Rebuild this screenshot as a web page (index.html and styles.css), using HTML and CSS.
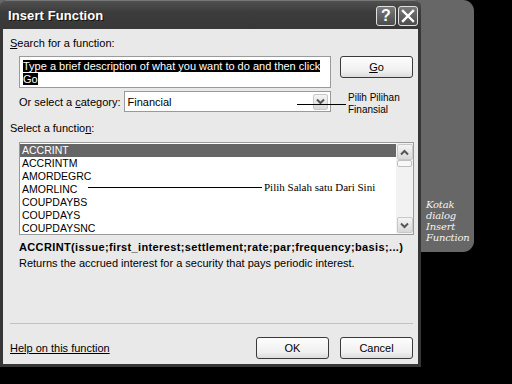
FILE: index.html
```html
<!DOCTYPE html>
<html>
<head>
<meta charset="utf-8">
<link rel="stylesheet" href="styles.css">
</head>
<body>
<div class="stage">
  <div class="panel">
    <div class="caption">Kotak dialog Insert Function</div>
  </div>
  <div class="dialog">
    <div class="titlebar">
      <span class="title">Insert Function</span>
      <div class="tbtns">
        <span class="tbtn">?</span>
        <span class="tbtn"><svg width="14" height="14" viewBox="0 0 14 14"><path d="M2 2 L12 12 M12 2 L2 12" stroke="#fff" stroke-width="2.4" stroke-linecap="square"/></svg></span>
      </div>
    </div>
    <div class="body">
      <div class="label lbl-search"><u>S</u>earch for a function:</div>
      <div class="row search-row">
        <div class="search-box"><span class="sel">Type a brief description of what you want to do and then click<br>Go</span></div>
        <div class="btn go"><u>G</u>o</div>
      </div>
      <div class="row cat-row">
        <div class="label">Or select a <u>c</u>ategory:</div>
        <div class="combo">
          <span>Financial</span>
          <span class="combo-btn"><svg width="9" height="7" viewBox="0 0 9 7"><path d="M1 1.5 L4.5 5 L8 1.5" stroke="#555" stroke-width="2" fill="none"/></svg></span>
        </div>
        <div class="note note-cat"><span class="note-line"></span><span class="note-text">Pilih Pilihan<br>Finansial</span></div>
      </div>
      <div class="label lbl-func">Select a functio<u>n</u>:</div>
      <div class="listbox">
        <div class="items">
          <div class="item active">ACCRINT</div>
          <div class="item">ACCRINTM</div>
          <div class="item">AMORDEGRC</div>
          <div class="item">AMORLINC</div>
          <div class="item">COUPDAYBS</div>
          <div class="item">COUPDAYS</div>
          <div class="item">COUPDAYSNC</div>
        </div>
        <div class="scrollbar">
          <span class="sbtn"><svg width="9" height="7" viewBox="0 0 9 7"><path d="M1 5.5 L4.5 2 L8 5.5" stroke="#555" stroke-width="2" fill="none"/></svg></span>
          <span class="thumb"></span>
          <span class="track"></span>
          <span class="sbtn"><svg width="9" height="7" viewBox="0 0 9 7"><path d="M1 1.5 L4.5 5 L8 1.5" stroke="#555" stroke-width="2" fill="none"/></svg></span>
        </div>
        <div class="note note-list"><span class="note-line"></span><span class="note-text serif">Pilih Salah satu Dari Sini</span></div>
      </div>
      <div class="sig">ACCRINT(issue;first_interest;settlement;rate;par;frequency;basis;...)</div>
      <div class="desc">Returns the accrued interest for a security that pays periodic interest.</div>
      <div class="spacer"></div>
      <div class="sep"></div>
      <div class="row foot">
        <span class="help">Help on this function</span>
        <div class="btns">
          <div class="btn">OK</div>
          <div class="btn">Cancel</div>
        </div>
      </div>
    </div>
  </div>
</div>
</body>
</html>
```
FILE: styles.css
```css
html, body {
  margin: 0;
  padding: 0;
  background: #000;
  width: 512px;
  height: 384px;
  overflow: hidden;
  font-family: "Liberation Sans", Arial, sans-serif;
  font-size: 11px;
  color: #000;
}
.stage {
  display: grid;
  grid-template-columns: 512px;
  grid-template-rows: 384px;
}
.panel, .dialog {
  grid-area: 1 / 1;
}
.panel {
  width: 474px;
  height: 252px;
  background: #676767;
  border-radius: 0 11px 11px 0;
  display: flex;
  justify-content: flex-end;
  align-items: flex-end;
  box-sizing: border-box;
  padding: 0 1px 9px 0;
}
.caption {
  width: 47px;
  color: #f4f4f4;
  font-family: "DejaVu Serif", serif;
  font-style: italic;
  font-size: 10px;
  line-height: 11px;
  letter-spacing: -0.2px;
}
.dialog {
  width: 421px;
  height: 367px;
  box-sizing: border-box;
  display: flex;
  flex-direction: column;
  background: #363636;
  border-radius: 6px 6px 0 0;
  padding: 0 3px 3px 3px;
  align-self: start;
  position: relative;
}
.titlebar {
  height: 29px;
  display: flex;
  align-items: center;
  justify-content: space-between;
  background: linear-gradient(#505050, #3c3c3c 40%, #383838);
  margin: 0 -3px;
  padding: 0 3px 0 8px;
  border-radius: 6px 6px 0 0;
  border-top: 1px solid #777;
  box-sizing: border-box;
}
.title {
  color: #fff;
  font-weight: bold;
  font-size: 13px;
  letter-spacing: 0.1px;
  text-shadow: 1px 1px 0 #111;
}
.tbtns {
  display: flex;
  gap: 2px;
  margin-top: 2px;
}
.tbtn {
  width: 20px;
  height: 20px;
  box-sizing: border-box;
  border: 1px solid #e0e0e0;
  border-radius: 3px;
  background: linear-gradient(#7a7a7a, #4c4c4c);
  color: #fff;
  font-weight: bold;
  font-size: 16px;
  display: flex;
  align-items: center;
  justify-content: center;
  line-height: 1;
}
.body {
  flex: 1;
  background: #e9e9e9;
  display: flex;
  flex-direction: column;
  padding: 0 5px 0 7px;
  position: relative;
}
.label {
  line-height: 14px;
  white-space: nowrap;
}
.lbl-search {
  margin-top: 7px;
}
.row {
  display: flex;
  align-items: flex-start;
}
.search-row {
  margin-top: 6px;
  padding-left: 9px;
}
.search-box {
  width: 312px;
  height: 32px;
  box-sizing: border-box;
  background: #fff;
  border: 1px solid #9a9a9a;
  padding: 3px 2px 0 3px;
  line-height: 12.5px;
  white-space: nowrap;
  overflow: hidden;
}
.sel {
  background: #000;
  color: #fff;
}
.btn {
  width: 73px;
  height: 22px;
  box-sizing: border-box;
  border: 1px solid #3a3a3a;
  border-radius: 3px;
  background: linear-gradient(#fdfdfd, #f0f0f0 70%, #dcdcdc);
  display: flex;
  align-items: center;
  justify-content: center;
}
.go {
  margin-left: 9px;
}
.cat-row {
  margin-top: 3px;
  padding-left: 9px;
  align-items: center;
  position: relative;
}
.combo {
  margin-left: 3px;
  width: 207px;
  height: 21px;
  box-sizing: border-box;
  background: #fff;
  border: 1px solid #9a9a9a;
  display: flex;
  align-items: center;
  justify-content: space-between;
  padding: 0 2px 0 3px;
}
.combo-btn, .sbtn {
  width: 15px;
  height: 16px;
  box-sizing: border-box;
  border: 1px solid #c8c8c8;
  border-radius: 2px;
  background: linear-gradient(#f4f4f4, #d8d8d8);
  display: flex;
  align-items: center;
  justify-content: center;
}
.note {
  position: absolute;
  display: flex;
  align-items: center;
}
.note-line {
  height: 1px;
  background: #000;
}
.note-cat {
  left: 287px;
  top: 1px;
}
.note-cat .note-line {
  width: 49px;
}
.note-text {
  font-size: 10px;
  line-height: 12px;
  margin-left: 2px;
}
.note-list {
  left: 68px;
  top: 38px;
}
.note-list .note-line {
  width: 174px;
}
.serif {
  font-family: "Liberation Serif", serif;
  font-size: 11px;
}
.lbl-func {
  margin-top: 9px;
}
.listbox {
  margin: 7px 0 0 9px;
  width: 395px;
  height: 93px;
  box-sizing: border-box;
  background: #fff;
  border: 1px solid #9a9a9a;
  display: flex;
  position: relative;
}
.items {
  flex: 1;
  padding-top: 1px;
}
.item {
  height: 13px;
  line-height: 13px;
  padding-left: 2px;
  font-size: 10.5px;
}
.item.active {
  background: #666;
  color: #fff;
}
.scrollbar {
  width: 17px;
  background: #f2f2f2;
  display: flex;
  flex-direction: column;
  align-items: center;
  padding: 1px 0;
}
.scrollbar .sbtn {
  width: 16px;
}
.thumb {
  width: 15px;
  height: 7px;
  box-sizing: border-box;
  border: 1px solid #c0c0c0;
  border-radius: 2px;
  background: #f8f8f8;
}
.track {
  flex: 1;
}
.sig {
  margin: 5px 0 0 9px;
  font-weight: bold;
  line-height: 14px;
  white-space: nowrap;
  letter-spacing: 0.36px;
}
.desc {
  margin: 2px 0 0 9px;
  line-height: 14px;
  white-space: nowrap;
}
.spacer {
  flex: 1;
}
.sep {
  height: 1px;
  background: #c2c2c2;
}
.foot {
  margin-top: 12px;
  height: 23px;
  margin-bottom: 5px;
  justify-content: space-between;
  align-items: center;
}
.help {
  text-decoration: underline;
}
.btns {
  display: flex;
  gap: 11px;
}
```
